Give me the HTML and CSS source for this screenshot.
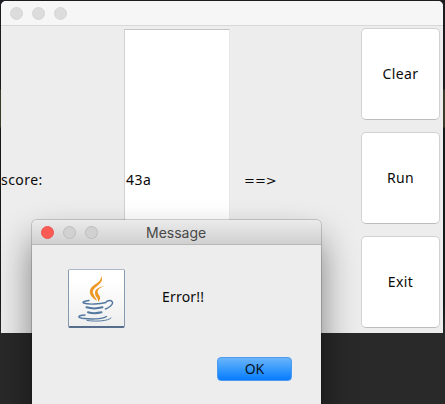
FILE: index.html
```html
<!DOCTYPE html>
<html lang="en">
<head>
<meta charset="utf-8">
<title>Score</title>
<link rel="stylesheet" href="styles.css">
</head>
<body>
<main class="desktop">
  <section class="window">
    <header class="titlebar"><i class="dot"></i><i class="dot"></i><i class="dot"></i></header>
    <div class="content">
      <div class="label"><span class="score">score:</span></div>
      <div class="field"><span class="value">43a</span></div>
      <div class="result"><span class="arrow">==&gt;</span></div>
      <div class="actions">
        <button class="action"><span class="clear">Clear</span></button>
        <button class="action"><span class="run">Run</span></button>
        <button class="action"><span class="exit">Exit</span></button>
      </div>
    </div>
  </section>
  <section class="dialog">
    <header class="dialog-bar">
      <i class="dot close"></i><i class="dot muted"></i><i class="dot muted"></i>
      <span class="dialog-title">Message</span>
    </header>
    <div class="message">
      <div class="java">
        <svg width="55" height="57" viewBox="0 0 55 57">
          <g fill="#ee9722">
            <path d="M32 6C37 14 22 17 24 23C25 26 27 28 28 31C22 27 19 23 22 18C25 14 33 12 32 6Z"/>
            <path d="M35.5 16C27 19 28 22 30 25C32 28 31 30 29 32C30 28 26 27 26 23C26 19 30 17 35.5 16Z"/>
          </g>
          <g fill="none" stroke="#53789f" stroke-linecap="round">
            <path d="M20 30.5C15 31 13 32 14.5 33C20 35 31 34 37 32.5" stroke-width="1.4"/>
            <path d="M37.5 31.5C43 29 45.5 32.5 41.5 36Q39.5 38 36.5 39" stroke-width="1.4"/>
            <path d="M17.5 37.3Q25 39.5 33.5 37.3" stroke-width="2"/>
            <path d="M19 42.2Q25 44 32.5 42.3" stroke-width="2"/>
            <path d="M16 45C9 45.5 8 47.2 13 48.2C22 49.5 33 49.2 37.5 46.5" stroke-width="1.4"/>
            <path d="M18 50.5C28 51.8 39 51 42 48" stroke-width="1"/>
          </g>
        </svg>
      </div>
      <span class="error">Error!!</span>
    </div>
    <button class="ok"><span class="ok-text">OK</span></button>
  </section>
</main>
</body>
</html>
```

FILE: styles.css
```css
* { box-sizing: border-box; }
body { margin: 0; font: 14px/20px "Noto Sans", sans-serif; color: #0a0a0a; }
button { font: inherit; color: inherit; padding: 0; }
span { display: inline-block; white-space: nowrap; }
.desktop {
  position: relative; width: 445px; height: 404px; overflow: hidden; padding: 1px 2px 0 1px;
  background: linear-gradient(#1e1b20 0 89px, #3b3a29 90px 127px, #171819 128px 300px, #292929 334px);
}
.window { height: 332px; background: #ededed; border-radius: 5px 5px 0 0; overflow: hidden; }
.titlebar { height: 25px; background: #f6f6f6; border-bottom: 1px solid #d8d8d8; display: flex; align-items: center; gap: 9px; padding-left: 9px; }
.dot { flex: none; width: 13px; height: 13px; border-radius: 50%; background: #dcdcdc; border: 1px solid #d6d6d6; }
.content { display: grid; grid-template-columns: 123px 107px 130px 79px; height: 307px; }
.label, .result { padding-top: 144px; }
.score { letter-spacing: .45px; }
.value { letter-spacing: .5px; }
.field { margin: 3px 1px 0 0; padding: 140px 0 0 1px; background: #fff; border: 1px solid #d2d2d2; border-top-color: #c5c5c5; border-right-color: #e8e8e8; }
.result { padding-left: 13px; }
.arrow { font: 13px/20px "DejaVu Sans", sans-serif; }
.actions { display: flex; flex-direction: column; gap: 12px; padding-top: 2px; }
.action { width: 79px; height: 92px; background: #fff; border: 1px solid #d2d2d2; border-bottom-color: #bdbdbd; border-radius: 5px; }
.clear { letter-spacing: .4px; }
.run { letter-spacing: .3px; }
.exit { letter-spacing: .4px; }
.dialog {
  position: absolute; left: 32px; top: 220px; width: 289px; height: 200px;
  background: #ededed; border-radius: 5px 5px 0 0;
  box-shadow: 0 0 0 1px rgba(0,0,0,.16), 0 20px 36px rgba(0,0,0,.48);
}
.dialog-bar { display: flex; align-items: center; gap: 9px; height: 25px; padding-left: 9px; border-radius: 5px 5px 0 0; background: linear-gradient(#ebebeb, #d0d0d0); border-bottom: 1px solid #b7b7b7; }
.close { background: #fc5b55; border-color: #ed554f; }
.muted { background: #d1d1d1; border-color: #bdbdbd; }
.dialog-title { margin-left: 39px; padding-top: 1px; font: 14px/20px Inter, sans-serif; color: #484848; }
.message { display: flex; padding: 24px 0 0 36px; height: 112px; }
.java { width: 57px; height: 59px; border: 1px solid #8799ad; border-top-color: #adb9c8; border-bottom: 2px solid #566e8c; border-radius: 2px; background: linear-gradient(#fff 20%, #eeeeef); }
.java svg { display: block; }
.error { margin: 18px 0 0 37px; letter-spacing: .2px; }
.ok { display: block; width: 75px; height: 24px; margin-left: 185px; border: 1px solid #4b9bef; border-radius: 4px; background: linear-gradient(#6bb4fb, #369afc 50%, #087bff); color: #061325; }
```
